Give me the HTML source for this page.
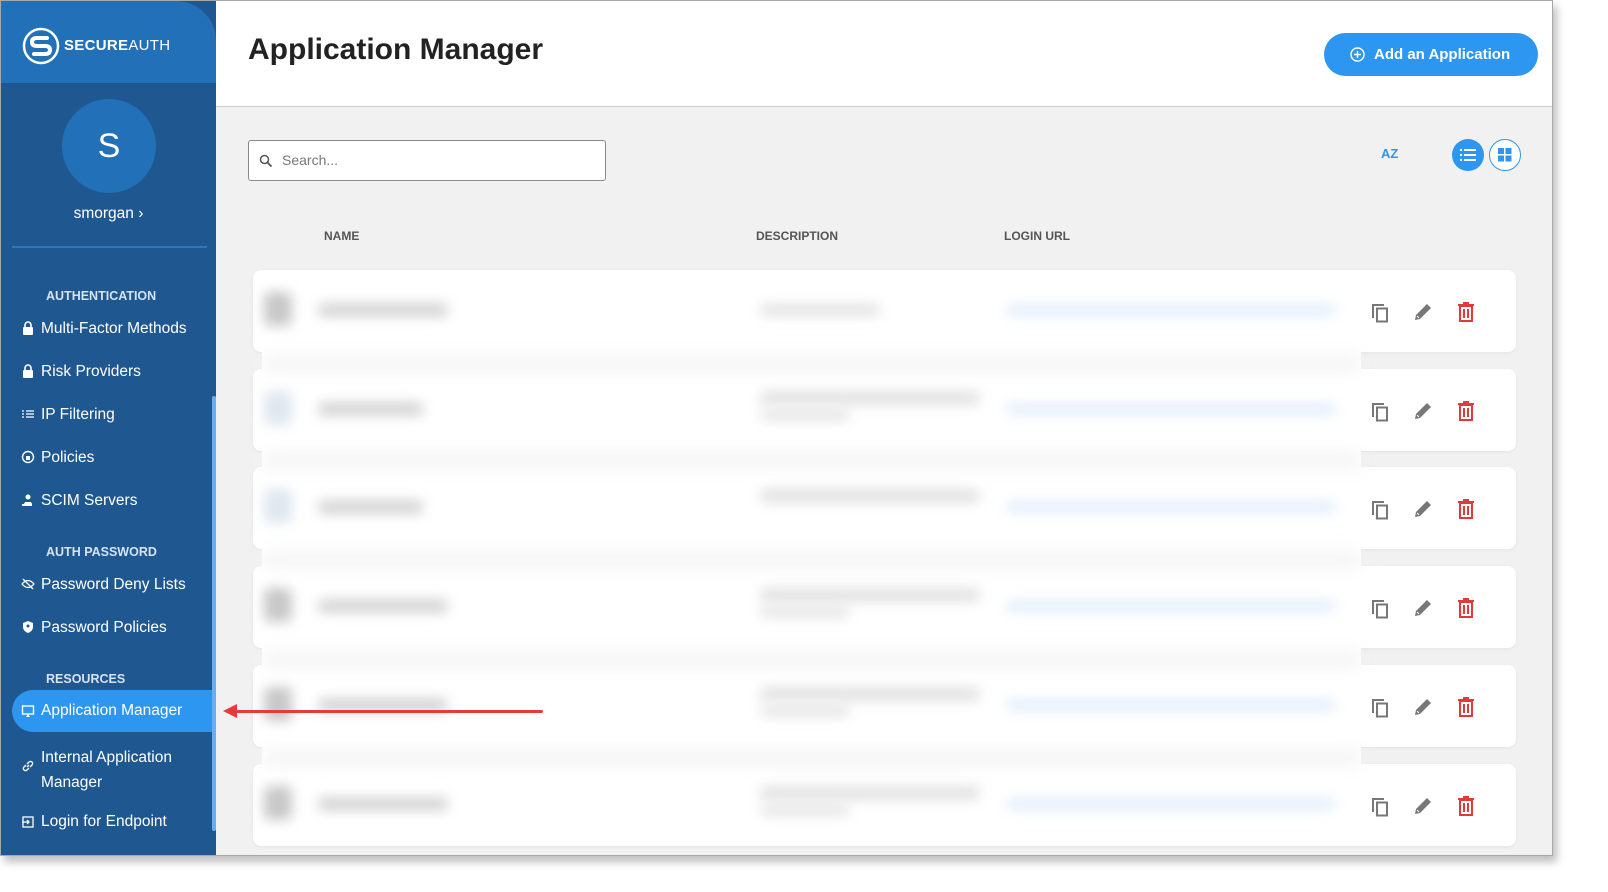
<!DOCTYPE html>
<html><head><style>
*{box-sizing:border-box;margin:0;padding:0}
body{width:1608px;height:892px;background:#fff;font-family:"Liberation Sans",sans-serif;position:relative;overflow:hidden}
#frame{position:absolute;left:0;top:0;width:1553px;height:856px;border:1px solid #a8a8a8;background:#f1f1f1;overflow:hidden;box-shadow:4px 6px 8px rgba(0,0,0,.25)}
#side{position:absolute;left:0;top:0;width:215px;height:856px;background:#1f5790;color:#fff}
#logo{height:82px;background:#2271b8;border-top-right-radius:40px;position:relative}
#main-head{position:absolute;left:215px;top:0;right:0;height:106px;background:#fff;border-bottom:1px solid #ccc}
.sec{position:absolute;left:45px;font-size:12.5px;font-weight:bold;color:#d5e3f2}
.it{position:absolute;left:40px;font-size:15.5px;color:#fff}
.ic{position:absolute;left:20px;width:14px;height:14px}
.card{position:absolute;left:252px;width:1263px;height:82px;background:#fff;border-radius:8px;box-shadow:0 1px 3px rgba(0,0,0,.06)}
.b{position:absolute;filter:blur(6px);border-radius:6px}
.act{position:absolute;top:32px}
</style></head><body>
<div id="frame">
<div id="side">
 <div id="logo">
  <svg style="position:absolute;left:21px;top:26px" width="38" height="38" viewBox="0 0 38 38"><circle cx="19" cy="19" r="17" fill="none" stroke="#fff" stroke-width="2.5"/><path d="M25 11 L15 11 Q10 11 10 15 Q10 19 15 19 L23 19 Q28 19 28 23 Q28 27 23 27 L12 27" fill="none" stroke="#fff" stroke-width="4" stroke-linecap="round"/></svg>
  <div style="position:absolute;left:63px;top:36px;font-size:15px;letter-spacing:.3px"><b>SECURE</b>AUTH</div>
 </div>
 <div style="position:absolute;left:61px;top:98px;width:94px;height:94px;border-radius:50%;background:#2271b8;text-align:center;line-height:94px;font-size:34px">S</div>
 <div style="position:absolute;left:0;width:215px;top:204px;text-align:center;font-size:15.5px">smorgan ›</div>
 <div style="position:absolute;left:11px;top:245px;width:195px;height:2px;background:#2a78c4"></div>
 <div class="sec" style="top:288px">AUTHENTICATION</div>
 <svg class="ic" style="top:320px" viewBox="0 0 14 14"><rect x="2" y="6" width="10" height="8" rx="1" fill="#fff"/><path d="M4 6V4a3 3 0 0 1 6 0v2" stroke="#fff" stroke-width="1.6" fill="none"/></svg>
 <div class="it" style="top:319px">Multi-Factor Methods</div>
 <svg class="ic" style="top:363px" viewBox="0 0 14 14"><rect x="2" y="6" width="10" height="8" rx="1" fill="#fff"/><path d="M4 6V4a3 3 0 0 1 6 0v2" stroke="#fff" stroke-width="1.6" fill="none"/></svg>
 <div class="it" style="top:362px">Risk Providers</div>
 <svg class="ic" style="top:406px" viewBox="0 0 14 14"><path d="M1 4h2M5 4h8M1 7h2M5 7h8M1 10h2M5 10h8" stroke="#fff" stroke-width="1.3"/></svg>
 <div class="it" style="top:405px">IP Filtering</div>
 <svg class="ic" style="top:449px" viewBox="0 0 14 14"><circle cx="7" cy="7" r="5.5" stroke="#fff" stroke-width="1.4" fill="none"/><rect x="5" y="6" width="4" height="4" fill="#fff"/></svg>
 <div class="it" style="top:448px">Policies</div>
 <svg class="ic" style="top:492px" viewBox="0 0 14 14"><circle cx="7" cy="4" r="2.5" fill="#fff"/><path d="M3 11h8v2H1v-2z M4 9h6l1 2H3z" fill="#fff"/></svg>
 <div class="it" style="top:491px">SCIM Servers</div>
 <div class="sec" style="top:544px">AUTH PASSWORD</div>
 <svg class="ic" style="top:576px" viewBox="0 0 14 14"><path d="M1 7q6-7 12 0q-6 7-12 0z" stroke="#fff" stroke-width="1.3" fill="none"/><path d="M2 2l10 10" stroke="#fff" stroke-width="1.3"/></svg>
 <div class="it" style="top:575px">Password Deny Lists</div>
 <svg class="ic" style="top:619px" viewBox="0 0 14 14"><path d="M7 1l5 2v4q0 4-5 6q-5-2-5-6V3z" fill="#fff"/><circle cx="7" cy="6" r="1.5" fill="#1f5790"/></svg>
 <div class="it" style="top:618px">Password Policies</div>
 <div class="sec" style="top:671px">RESOURCES</div>
 <div style="position:absolute;left:11px;top:689px;width:200px;height:42px;background:#2d96f0;border-radius:21px 0 0 21px"></div>
 <svg class="ic" style="top:703px" viewBox="0 0 14 14"><rect x="1.5" y="2" width="11" height="8" stroke="#fff" stroke-width="1.4" fill="none"/><path d="M5 13l2-3 2 3z" fill="#fff"/></svg>
 <div class="it" style="top:701px">Application Manager</div>
 <svg class="ic" style="top:758px" viewBox="0 0 14 14"><path d="M6 8l2-2M5 6L3 8a2 2 0 0 0 3 3l2-2M9 8l2-2a2 2 0 0 0-3-3L6 5" stroke="#fff" stroke-width="1.3" fill="none"/></svg>
 <div class="it" style="top:744px;line-height:25px">Internal Application<br>Manager</div>
 <svg class="ic" style="top:814px" viewBox="0 0 14 14"><rect x="2" y="2" width="10" height="10" stroke="#fff" stroke-width="1.3" fill="none"/><path d="M1 7h7M6 5l2 2-2 2" stroke="#fff" stroke-width="1.3" fill="none"/></svg>
 <div class="it" style="top:812px">Login for Endpoint</div>
 <div style="position:absolute;left:211px;top:395px;width:4px;height:435px;background:#6aaef0;border-radius:2px"></div>
</div>
<div id="main-head">
 <div style="position:absolute;left:32px;top:32px;font-size:30px;font-weight:bold;color:#222">Application Manager</div>
 <div style="position:absolute;left:1108px;top:32px;width:214px;height:43px;border-radius:22px;background:#2d96f0;color:#fff;font-weight:bold;font-size:15px;line-height:43px;padding-left:50px">Add an Application
  <svg style="position:absolute;left:26px;top:14px" width="15" height="15" viewBox="0 0 15 15"><circle cx="7.5" cy="7.5" r="6.5" stroke="#fff" stroke-width="1.5" fill="none"/><path d="M7.5 4v7M4 7.5h7" stroke="#fff" stroke-width="1.5"/></svg></div>
</div>
<div style="position:absolute;left:247px;top:139px;width:358px;height:41px;border:1px solid #8a8a8a;border-radius:3px;background:#fff">
 <svg style="position:absolute;left:10px;top:13px" width="14" height="14" viewBox="0 0 14 14"><circle cx="5.5" cy="5.5" r="4" stroke="#555" stroke-width="1.5" fill="none"/><path d="M8.5 8.5l4 4" stroke="#555" stroke-width="1.8"/></svg>
 <div style="position:absolute;left:33px;top:11px;font-size:14px;color:#777">Search...</div>
</div>
<div style="position:absolute;left:1380px;top:145px;font-size:13px;font-weight:bold;color:#2d96f0">AZ</div>
<div style="position:absolute;left:1451px;top:138px;width:32px;height:32px;border-radius:50%;background:#2d96f0"><svg style="position:absolute;left:8px;top:10px" width="16" height="12" viewBox="0 0 16 12"><path d="M0 1h2M4 1h12M0 6h2M4 6h12M0 11h2M4 11h12" stroke="#fff" stroke-width="2"/></svg></div>
<div style="position:absolute;left:1488px;top:138px;width:32px;height:32px;border-radius:50%;border:1.5px solid #2d96f0;background:#fff"><svg style="position:absolute;left:8px;top:8px" width="14" height="14" viewBox="0 0 14 14"><rect width="6" height="6" fill="#2d96f0"/><rect x="7.5" width="6" height="6" fill="#2d96f0"/><rect y="7.5" width="6" height="6" fill="#2d96f0"/><rect x="7.5" y="7.5" width="6" height="6" fill="#2d96f0"/></svg></div>
<div style="position:absolute;top:228px;left:323px;font-size:12px;font-weight:bold;color:#555">NAME</div>
<div style="position:absolute;top:228px;left:755px;font-size:12px;font-weight:bold;color:#555">DESCRIPTION</div>
<div style="position:absolute;top:228px;left:1003px;font-size:12px;font-weight:bold;color:#555">LOGIN URL</div>
<div id="rows"></div>
<div id="ov" style="position:absolute;left:261px;top:277px;width:1099px;height:559px;background:#fff"></div>
<div style="position:absolute;left:232px;top:709px;width:310px;height:3px;background:#e93a3a;border-radius:2px"></div>
<div style="position:absolute;left:222px;top:703px;width:0;height:0;border-top:7px solid transparent;border-bottom:7px solid transparent;border-right:14px solid #e93a3a"></div>
</div>
<script>
var ys=[269,368,466,565,664,763],h='',o='';
ys.forEach(function(y,i){
h+='<div class="card" style="top:'+y+'px">'+
'<svg class="act" style="left:1117px" width="20" height="22" viewBox="0 0 20 22"><path d="M3 16V3h11" stroke="#777" stroke-width="2" fill="none"/><rect x="7" y="6.5" width="10" height="13" stroke="#777" stroke-width="2" fill="none"/></svg>'+
'<svg class="act" style="left:1160px" width="20" height="20" viewBox="0 0 20 20"><path d="M2 18l1-5L14 2l4 4L7 17z" fill="#777"/><path d="M4 14l2 2" stroke="#fff" stroke-width="1"/></svg>'+
'<svg class="act" style="left:1204px" width="18" height="20" viewBox="0 0 18 20"><path d="M1 3h16M6 1h6" stroke="#e03a3a" stroke-width="2"/><rect x="3" y="4" width="12" height="15" stroke="#e03a3a" stroke-width="2" fill="none"/><path d="M7 7v9M11 7v9" stroke="#e03a3a" stroke-width="2"/></svg>'+
'</div>';
var t=y-277;
if(i>0) o+='<div class="b" style="left:0;top:'+(t-14)+'px;width:1099px;height:16px;background:#f4f4f4;filter:blur(8px)"></div>';
o+='<div class="b" style="left:2px;top:'+(t+22)+'px;width:28px;height:34px;background:'+(i==1||i==2?'#dfe7ef':'#c8c8c8')+'"></div>'+
'<div class="b" style="left:56px;top:'+(t+33)+'px;width:'+(i==1||i==2?105:130)+'px;height:14px;background:#d4d4d4"></div>'+
(i==0?'<div class="b" style="left:498px;top:'+(t+34)+'px;width:120px;height:12px;background:#e2e2e2"></div>':
'<div class="b" style="left:498px;top:'+(t+22)+'px;width:220px;height:14px;background:#e2e2e2"></div><div class="b" style="left:498px;top:'+(t+40)+'px;width:'+(i==2?0:90)+'px;height:12px;background:#e6e6e6"></div>')+
'<div class="b" style="left:744px;top:'+(t+34)+'px;width:330px;height:12px;background:#e4eefc"></div>';
});
document.getElementById('rows').innerHTML=h;
document.getElementById('ov').innerHTML=o;
</script>
</body></html>
